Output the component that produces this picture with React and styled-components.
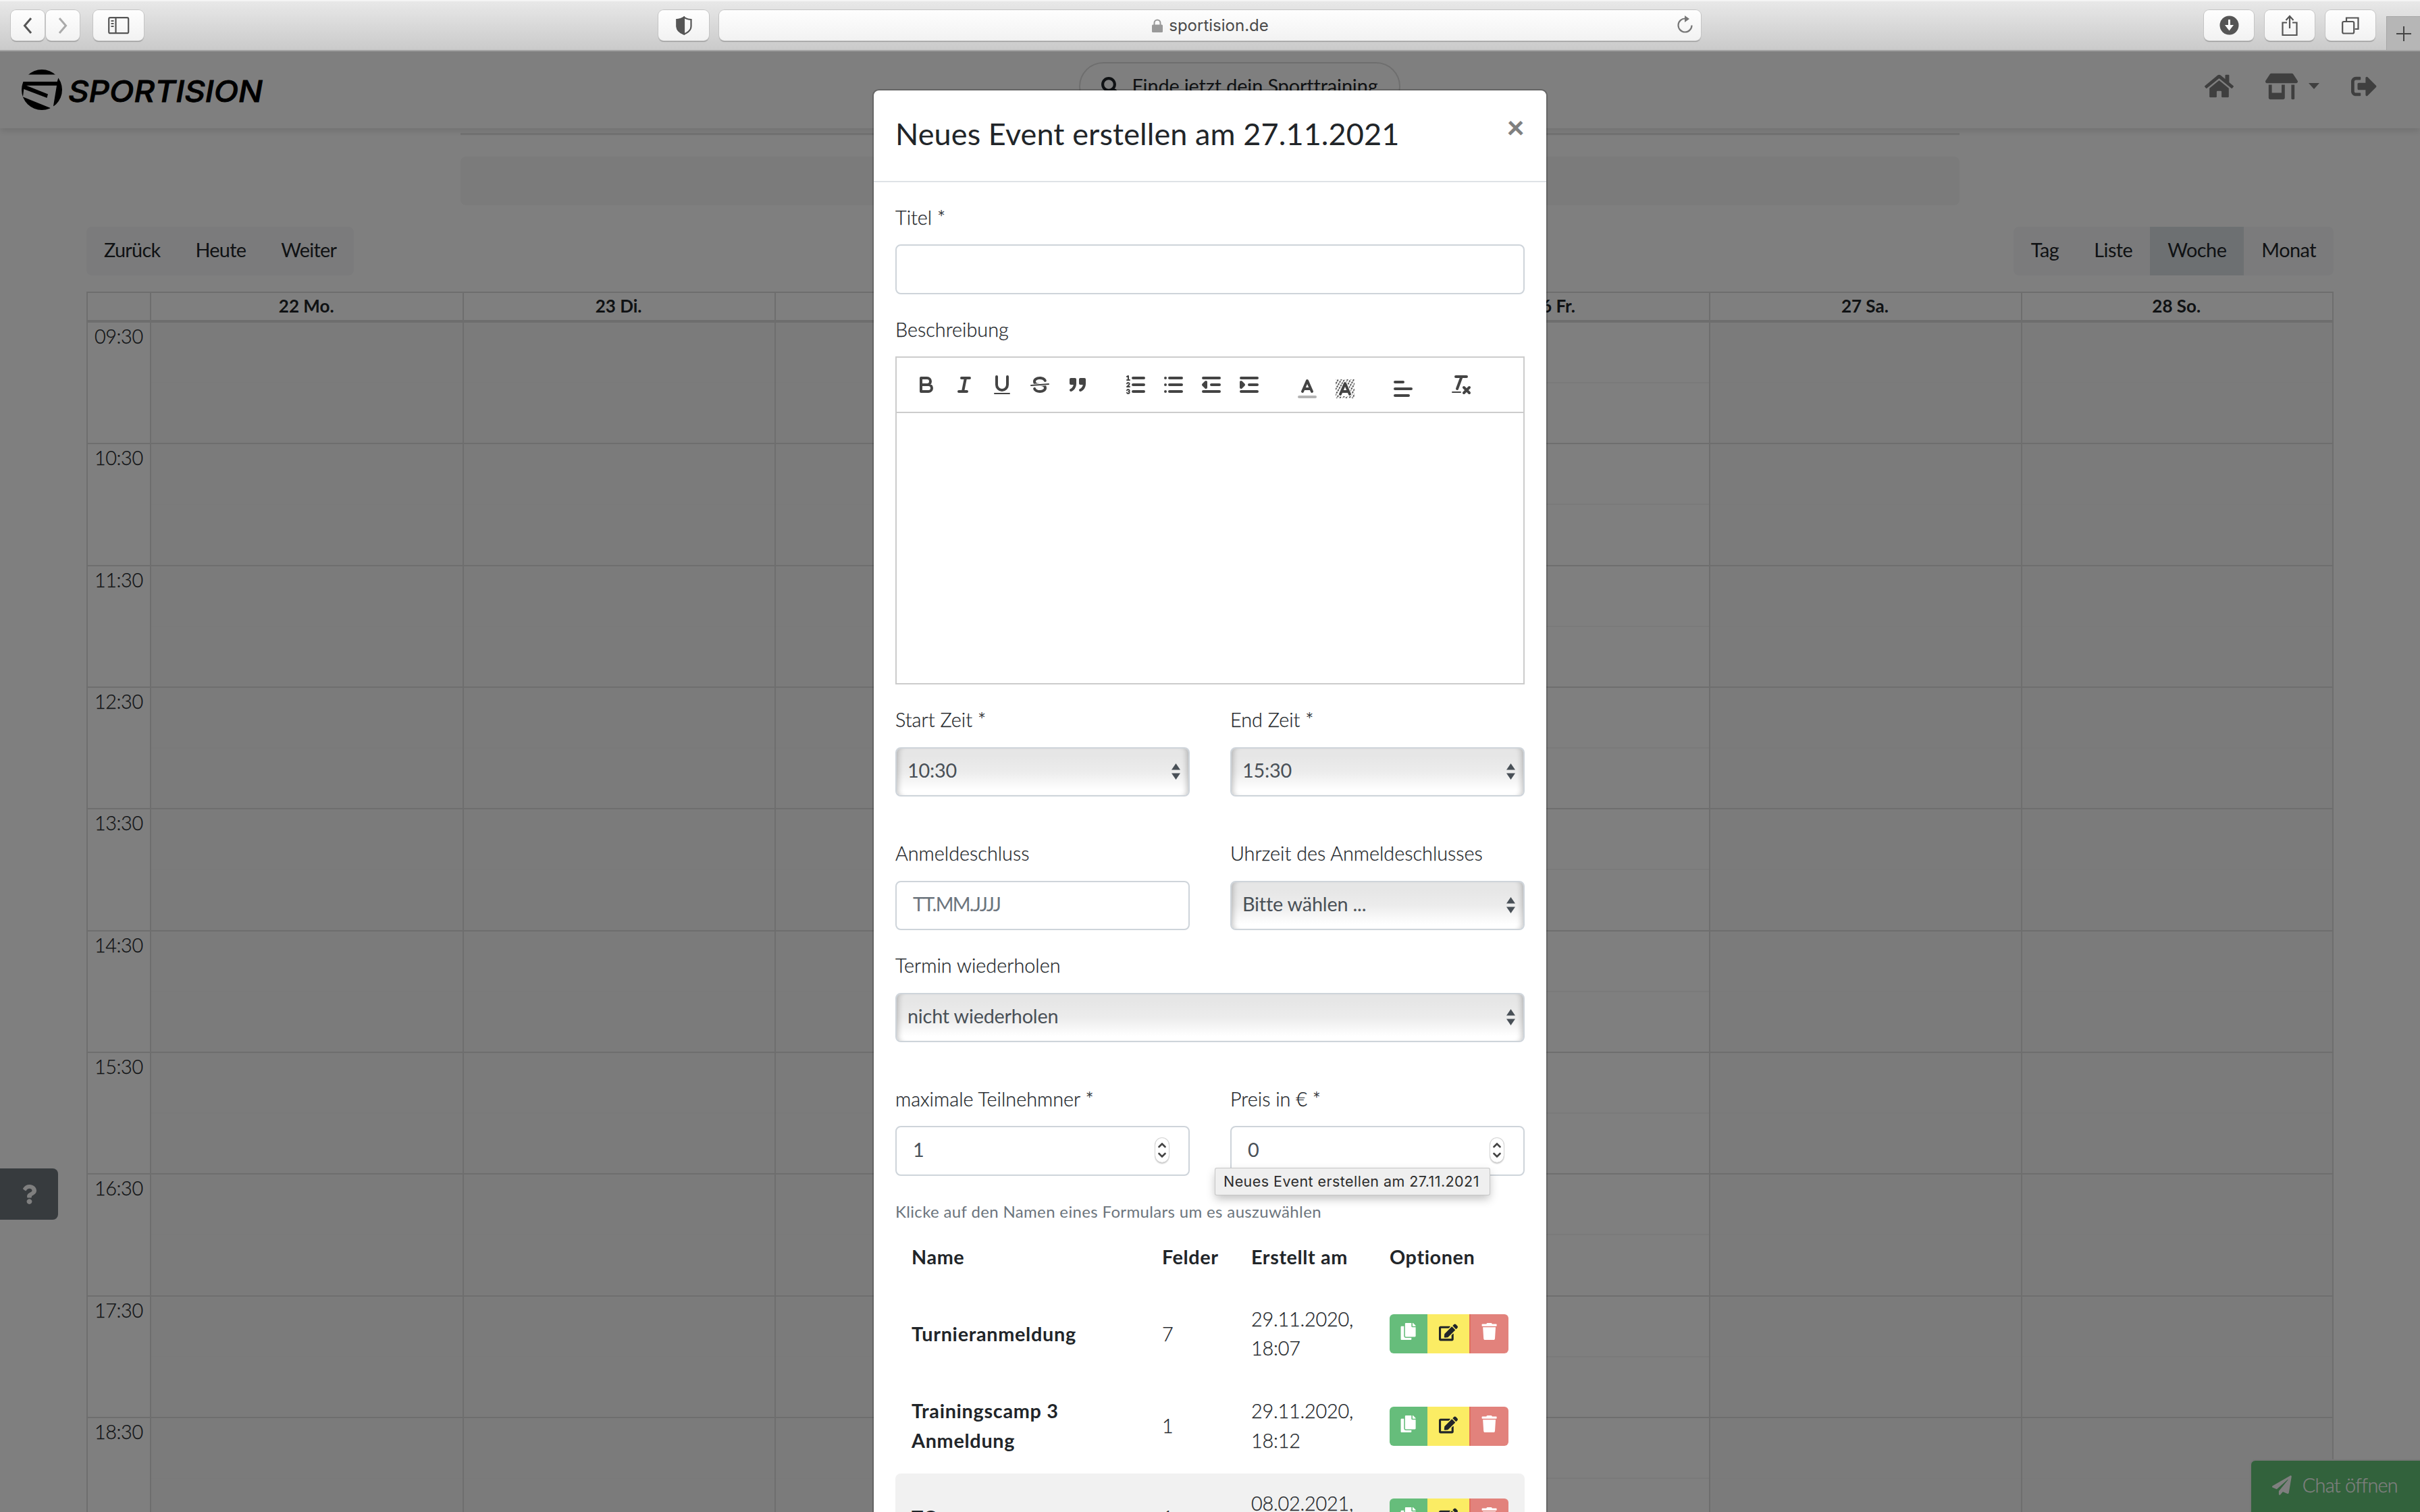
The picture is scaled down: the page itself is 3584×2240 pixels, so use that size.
import React from "react";
import styled, { createGlobalStyle, css } from "styled-components";
import {
  FaCopy,
  FaEdit,
  FaHome,
  FaPaperPlane,
  FaQuestion,
  FaSearch,
  FaSignOutAlt,
  FaStoreAlt,
  FaTrash,
} from "react-icons/fa";

const days = ["22 Mo.", "23 Di.", "24 Mi.", "25 Do.", "26 Fr.", "27 Sa.", "28 So."];
const hours = ["09:30", "10:30", "11:30", "12:30", "13:30", "14:30", "15:30", "16:30", "17:30", "18:30"];
const openDay = 4;

const forms = [
  { name: "Turnieranmeldung", fields: 7, date: "29.11.2020,", time: "18:07" },
  { name: "Trainingscamp 3 Anmeldung", fields: 1, date: "29.11.2020,", time: "18:12" },
  { name: "TC", fields: 1, date: "08.02.2021,", time: "10:21", active: true },
];

function BrowserBar() {
  return (
    <Bar>
      <BarGroup>
        <BarButton $w={50}>
          <svg width="14" height="26" viewBox="0 0 14 26"><path d="M12 2 2.5 13 12 24" /></svg>
        </BarButton>
        <BarButton $w={50} $muted>
          <svg width="14" height="26" viewBox="0 0 14 26"><path d="M2 2l9.5 11L2 24" /></svg>
        </BarButton>
        <BarButton $w={75} $left={18} $thin>
          <svg width="32" height="26" viewBox="0 0 32 26">
            <rect x="1.2" y="1.2" width="29" height="23" rx="2" />
            <path d="M11.5 1v24M4.5 6h4M4.5 10h4M4.5 14h4" />
          </svg>
        </BarButton>
      </BarGroup>
      <AddressGroup>
        <BarButton $w={75} $thin>
          <svg width="24" height="28" viewBox="0 0 24 28">
            <path d="M12 1.500c3 2.400 6.500 3.400 10.500 3.500v10c0 5-4 9-10.500 11.500C5.500 24 1.500 20 1.500 15V5C5.500 4.900 9 3.900 12 1.500z" />
            <path d="M12 1.500v25C5.500 24 1.500 20 1.500 15V5C5.500 4.900 9 3.900 12 1.500z" fill="#555" />
          </svg>
        </BarButton>
        <Address>
          <svg width="18" height="20" viewBox="0 0 18 20">
            <rect x="1" y="8.500" width="16" height="11.500" rx="1.500" fill="#999" />
            <path d="M4.500 9V6a4.500 4.500 0 0 1 9 0v3" fill="none" stroke="#999" strokeWidth="2" />
          </svg>
          <span>sportision.de</span>
          <Reload width="26" height="28" viewBox="0 0 26 28">
            <path d="M14 4.500a10 10 0 1 0 9.500 10" fill="none" stroke="#777" strokeWidth="2.200" />
            <path d="M13 0v10l7-5z" fill="#777" />
          </Reload>
        </Address>
      </AddressGroup>
      <RightGroup>
        <BarButton $w={74}>
          <svg width="29" height="29" viewBox="0 0 29 29">
            <circle cx="14.500" cy="14.500" r="14" fill="#555" stroke="none" />
            <path d="M14.500 6v9" stroke="#fff" />
            <path d="M8 14h13l-6.500 8.500z" fill="#fff" stroke="none" />
          </svg>
        </BarButton>
        <BarButton $w={74} $thin>
          <svg width="24" height="32" viewBox="0 0 24 32">
            <path d="M8 11.500H1.500V30h21V11.500H16M12 20V3M6.500 8 12 2l5.500 6" />
          </svg>
        </BarButton>
        <BarButton $w={74} $thin>
          <svg width="26" height="26" viewBox="0 0 26 26">
            <rect x="1.200" y="7" width="17" height="17.500" rx="2" />
            <path d="M7 6.500V1.500h17.500V18h-5" />
          </svg>
        </BarButton>
      </RightGroup>
      <NewTab>
        <svg width="24" height="24" viewBox="0 0 24 24"><path d="M12 1v22M1 12h22" /></svg>
      </NewTab>
    </Bar>
  );
}

function Logo() {
  return (
    <LogoSvg width="380" height="64" viewBox="0 0 380 64">
      <defs>
        <clipPath id="ball"><circle cx="30" cy="32" r="30" /></clipPath>
      </defs>
      <g clipPath="url(#ball)">
        <path d="M0 0h60v9.500H0z" />
        <path d="M0 20h52.700l1.600-5.500H60V64L47 56l5-30.300H7l32 12.800-1.500 5.500L3.300 31 2 42H0z" />
        <path d="M0 41.500l2 1L42.700 59v5H0z" />
      </g>
      <text x="69" y="50" textLength="288" lengthAdjust="spacingAndGlyphs">SPORTISION</text>
    </LogoSvg>
  );
}

function Navbar() {
  return (
    <Nav>
      <Logo />
      <SearchPill>
        <FaSearch size={27} />
        <span>Finde jetzt dein Sporttraining</span>
      </SearchPill>
      <NavIcons>
        <FaHome size={43} />
        <NavDropdown>
          <FaStoreAlt size={48} />
          <Caret />
        </NavDropdown>
        <FaSignOutAlt size={38} />
      </NavIcons>
    </Nav>
  );
}

function Calendar() {
  return (
    <CalendarWrap>
      <CalendarToolbar>
        <ButtonGroup $tight>
          <GroupButton>Zurück</GroupButton>
          <GroupButton>Heute</GroupButton>
          <GroupButton>Weiter</GroupButton>
        </ButtonGroup>
        <ButtonGroup>
          <GroupButton>Tag</GroupButton>
          <GroupButton>Liste</GroupButton>
          <GroupButton $active>Woche</GroupButton>
          <GroupButton>Monat</GroupButton>
        </ButtonGroup>
      </CalendarToolbar>
      <TimeView>
        <DayHeader>
          <Gutter />
          {days.map((day) => <DayName key={day}>{day}</DayName>)}
        </DayHeader>
        {hours.map((hour) => (
          <HourRow key={hour}>
            <Gutter>{hour}</Gutter>
            {days.map((day, i) => (
              <Slot key={day} $open={i === openDay}><i /></Slot>
            ))}
          </HourRow>
        ))}
      </TimeView>
    </CalendarWrap>
  );
}

const icons = {
  bold: (
    <path d="M5 4h4.500a2.500 2.500 0 0 1 0 5H5zM5 9h5.500a2.500 2.500 0 0 1 0 5H5z" />
  ),
  italic: <path d="M7 4h6M5 14h6M8 14l2-10" />,
  underline: (
    <>
      <path d="M5 3v6a4 4 0 0 0 8 0V3" />
      <rect className="fill" x="3" y="15" width="12" height="1" rx=".5" />
    </>
  ),
  strike: (
    <>
      <path className="thin" d="M15.500 8.500l-13 1" />
      <path className="fill" d="M9.007 8C6.542 7.791 6 7.519 6 6.500 6 5.792 7.283 5 9 5c1.571 0 2.765.679 2.969 1.309a1 1 0 0 0 1.900-.617C13.356 4.106 11.354 3 9 3 6.200 3 4 4.538 4 6.500a3.200 3.200 0 0 0 .5 1.843z" />
      <path className="fill" d="M8.984 10C11.457 10.208 12 10.479 12 11.500c0 .708-1.283 1.500-3 1.500-1.571 0-2.765-.679-2.969-1.309a1 1 0 1 0-1.900.617C4.644 13.894 6.646 15 9 15c2.800 0 5-1.538 5-3.500a3.200 3.200 0 0 0-.5-1.843z" />
    </>
  ),
  quote: (
    <>
      <rect className="both" x="4" y="5" width="3" height="3" />
      <rect className="both" x="11" y="5" width="3" height="3" />
      <path className="both" d="M7 8c0 4.031-3 5-3 5M14 8c0 4.031-3 5-3 5" />
    </>
  ),
  ordered: (
    <>
      <path d="M7 4h8M7 9h8M7 14h8" />
      <path className="thin" d="M2.500 5.500h2M2.500 3l1-.5v3M4.500 10.500h-2c0-.234 1.850-1.076 1.850-2.234a.959.959 0 0 0-1.850-.110M2.500 14.846a.959.959 0 0 0 1.850-.109A.7.7 0 0 0 3.750 14a.688.688 0 0 0 .6-.736.959.959 0 0 0-1.850-.109" />
    </>
  ),
  bullet: <path d="M6 4h9M6 9h9M6 14h9M3 4h0M3 9h0M3 14h0" />,
  outdent: (
    <>
      <path d="M3 14h12M3 4h12M9 9h6" />
      <path className="both" d="M5 7v4L3 9z" />
    </>
  ),
  indent: (
    <>
      <path d="M3 14h12M3 4h12M9 9h6" />
      <path className="both" d="M3 7v4l2-2z" />
    </>
  ),
  color: (
    <>
      <path d="M3 15h12" opacity=".4" />
      <path d="M5.500 11 9 3l3.500 8M11.630 9H6.380" />
    </>
  ),
  background: (
    <>
      <defs>
        <pattern id="hatch" width="2" height="2" patternUnits="userSpaceOnUse" patternTransform="rotate(30)">
          <rect className="fill" width=".9" height="1.400" />
        </pattern>
      </defs>
      <rect x="2" y="2" width="14" height="14" fill="url(#hatch)" stroke="none" />
      <path className="halo" d="M5.500 13 9 5l3.500 8z" />
      <path d="M5.500 13 9 5l3.500 8M11.630 11H6.380" />
    </>
  ),
  align: <path d="M3 9h12M3 14h10M3 4h6" />,
  clean: (
    <>
      <path d="M5 3h8M6 12l3.350-9M11 11l4 4M15 11l-4 4" />
      <rect className="fill" x="2" y="14" width="7" height="1" rx=".5" />
    </>
  ),
};

const toolbarGroups = [
  { items: ["bold", "italic", "underline", "strike", "quote"] },
  { items: ["ordered", "bullet", "outdent", "indent"] },
  { items: ["color", "background"], picker: true },
  { items: ["align"], picker: true },
  { items: ["clean"] },
];

function Editor() {
  return (
    <EditorBox>
      <EditorToolbar>
        {toolbarGroups.map((group) => (
          <Formats key={group.items[0]} $picker={group.picker}>
            {group.items.map((name) => (
              <svg key={name} viewBox="0 0 18 18">{icons[name]}</svg>
            ))}
          </Formats>
        ))}
      </EditorToolbar>
      <EditorArea />
    </EditorBox>
  );
}

function SelectField({ label, value }) {
  return (
    <Field>
      <Label>{label}</Label>
      <Select>
        {value}
        <svg width="13" height="24" viewBox="0 0 13 24"><path d="M6.500 0 13 9.500H0zM6.500 24 0 14.500h13z" /></svg>
      </Select>
    </Field>
  );
}

function NumberField({ label, value, children }) {
  return (
    <Field>
      <Label>{label}</Label>
      <Input>
        {value}
        <Stepper>
          <svg width="12" height="22" viewBox="0 0 12 22"><path d="M1.500 6 6 1.500 10.500 6M1.500 16 6 20.500l4.500-4.500" /></svg>
        </Stepper>
        {children}
      </Input>
    </Field>
  );
}

function FormRow({ form }) {
  return (
    <Row $active={form.active}>
      <strong>{form.name}</strong>
      <span>{form.fields}</span>
      <span>{form.date}<br />{form.time}</span>
      <Actions>
        <Action $bg="#66bd7b" $w={56}><FaCopy /></Action>
        <Action $bg="#fbec64" $color="#212529" $w={62}><FaEdit size={28} /></Action>
        <Action $bg="#e2827c" $w={58} $edge><FaTrash /></Action>
      </Actions>
    </Row>
  );
}

function EventModal() {
  return (
    <Modal>
      <ModalHeader>
        <ModalTitle>Neues Event erstellen am 27.11.2021</ModalTitle>
        <Close>×</Close>
      </ModalHeader>
      <ModalBody>
        <Field>
          <Label>Titel *</Label>
          <Input />
        </Field>
        <Field>
          <Label>Beschreibung</Label>
          <Editor />
        </Field>
        <Columns $spaced>
          <SelectField label="Start Zeit *" value="10:30" />
          <SelectField label="End Zeit *" value="15:30" />
        </Columns>
        <Columns>
          <Field>
            <Label>Anmeldeschluss</Label>
            <Input $placeholder>TT.MM.JJJJ</Input>
          </Field>
          <SelectField label="Uhrzeit des Anmeldeschlusses" value="Bitte wählen ..." />
        </Columns>
        <Columns $spaced>
          <SelectField label="Termin wiederholen" value="nicht wiederholen" />
        </Columns>
        <Columns>
          <NumberField label="maximale Teilnehmner *" value="1" />
          <NumberField label="Preis in € *" value="0">
            <Tooltip>Neues Event erstellen am 27.11.2021</Tooltip>
          </NumberField>
        </Columns>
        <Hint>Klicke auf den Namen eines Formulars um es auszuwählen</Hint>
        <HeadRow>
          <strong>Name</strong>
          <strong>Felder</strong>
          <strong>Erstellt am</strong>
          <strong>Optionen</strong>
        </HeadRow>
        {forms.map((form) => <FormRow key={form.name} form={form} />)}
      </ModalBody>
    </Modal>
  );
}

export default function App() {
  return (
    <>
      <GlobalStyle />
      <BrowserBar />
      <Viewport>
        <Navbar />
        <Content>
          <Divider />
          <Panel />
        </Content>
        <Calendar />
        <HelpButton><FaQuestion /></HelpButton>
        <ChatButton><FaPaperPlane /> <span>Chat öffnen</span></ChatButton>
        <Backdrop />
        <EventModal />
      </Viewport>
    </>
  );
}

const GlobalStyle = createGlobalStyle`
  * {
    box-sizing: border-box;
  }
  body {
    margin: 0;
    background: #fff;
    color: #212529;
    font-family: Lato, sans-serif;
    font-size: 28.8px;
    font-weight: 300;
    line-height: 1.5;
    overflow: hidden;
  }
`;

/* Lato Light is a bit thin at this size */
const lightText = css`
  -webkit-text-stroke: .25px currentColor;
`;

/* browser toolbar */
const Bar = styled.div`
  display: grid;
  grid-template-columns: 975px 1544px 1fr 50px;
  align-items: start;
  height: 76px;
  padding-top: 13px;
  background: linear-gradient(#e8e8e8, #cacaca);
  border-top: 2px solid #f4f4f4;
  border-bottom: 2px solid #a4a4a4;
`;

const BarGroup = styled.div`
  display: flex;
  gap: 2px;
  padding-left: 16px;
`;

const AddressGroup = styled.div`
  display: flex;
  gap: 15px;
`;

const RightGroup = styled.div`
  display: flex;
  justify-content: flex-end;
  gap: 16px;
  padding-right: 16px;
`;

const raised = css`
  height: 45px;
  border-radius: 8px;
  background: linear-gradient(#fefefe, #f2f2f2);
  box-shadow: 0 0 0 1px #c4c4c4, 0 2px 1px #999;
`;

const BarButton = styled.div`
  ${raised}
  width: ${(p) => p.$w}px;
  margin-left: ${(p) => p.$left || 0}px;
  display: flex;
  align-items: center;
  justify-content: center;
  svg {
    fill: none;
    stroke: ${(p) => (p.$muted ? "#aaa" : "#555")};
    stroke-width: ${(p) => (p.$thin ? 2.2 : 3)};
  }
`;

const Address = styled.div`
  ${raised}
  flex: 1;
  position: relative;
  display: flex;
  align-items: center;
  justify-content: center;
  gap: 8px;
  color: #4a4a4a;
  font: 400 24px Inter, sans-serif;
`;

const Reload = styled.svg`
  position: absolute;
  right: 11px;
  top: 8px;
`;

const NewTab = styled.div`
  height: 50px;
  margin-top: 9px;
  display: flex;
  align-items: center;
  justify-content: center;
  background: #b6b6b6;
  border: solid #a6a6a6;
  border-width: 1px 0 0 1px;
  svg {
    stroke: #444;
    stroke-width: 2;
  }
`;

/* page */
const Viewport = styled.div`
  position: relative;
  height: 2164px;
  overflow: hidden;
`;

const Nav = styled.nav`
  display: grid;
  grid-template-columns: 1568px 1fr auto;
  align-items: center;
  height: 114px;
  padding: 0 64px 11px 30px;
  box-shadow: 0 4px 10px rgba(0, 0, 0, .12);
`;

const LogoSvg = styled.svg`
  margin-top: 10px;
  margin-left: 2px;
  text {
    font: italic 500 44px Inter, sans-serif;
    stroke: #000;
    stroke-width: .8;
  }
`;

const SearchPill = styled.div`
  width: 476px;
  height: 72px;
  display: flex;
  align-items: center;
  justify-content: center;
  gap: 18px;
  border: 2px solid #ddd;
  border-radius: 36px;
  font-weight: 400;
  letter-spacing: -.1px;
`;

const NavIcons = styled.div`
  display: flex;
  align-items: center;
  gap: 47px;
  color: #7f7f7f;
`;

const NavDropdown = styled.div`
  display: flex;
  align-items: center;
  gap: 16px;
`;

const Caret = styled.i`
  border: 8px solid transparent;
  border-top: 9px solid #7f7f7f;
  border-bottom: 0;
`;

const Content = styled.div`
  width: 2220px;
  margin: 7px 0 0 682px;
`;

const Divider = styled.div`
  height: 3px;
  background: #e0e0e0;
`;

const Panel = styled.div`
  height: 72px;
  margin-top: 32px;
  border-radius: 8px;
  background: #f6f7f7;
`;

const CalendarWrap = styled.div`
  margin: 32px 128px 0;
`;

const CalendarToolbar = styled.div`
  display: flex;
  justify-content: space-between;
  margin-bottom: 24px;
`;

const ButtonGroup = styled.div`
  display: flex;
  height: 72px;
  border-radius: 8px;
  background: #f6f7f8;
  letter-spacing: ${(p) => (p.$tight ? "-.7px" : "-.5px")};
`;

const GroupButton = styled.div`
  display: flex;
  align-items: center;
  padding: 0 26px 3px;
  font-weight: 400;
  background: ${(p) => (p.$active ? "#dae0e5" : "none")};
`;

const TimeView = styled.div`
  border: 2px solid #ddd;
  background: #fff;
`;

const weekGrid = css`
  display: grid;
  grid-template-columns: 94px repeat(7, 1fr);
`;

const DayHeader = styled.div`
  ${weekGrid}
  height: 44px;
  border-bottom: 4px solid #ddd;
`;

const HourRow = styled.div`
  ${weekGrid}
  height: 180.33px;
`;

const Gutter = styled.div`
  ${lightText}
  padding: 0 10px;
  letter-spacing: -.4px;
  line-height: 41px;
  border-right: 2px solid #ddd;
  ${HourRow} & {
    border-bottom: 2px solid #ddd;
  }
`;

const DayName = styled.div`
  padding-right: 2px;
  font-size: 26px;
  font-weight: 700;
  line-height: 39px;
  text-align: center;
  & + & {
    border-left: 2px solid #ddd;
  }
`;

const Slot = styled.div`
  background: ${(p) => (p.$open ? "#fff" : "#f6f6f6")};
  border-bottom: 2px solid #ddd;
  & + & {
    border-left: 2px solid #ddd;
  }
  i {
    display: block;
    height: 90px;
    border-bottom: 2px solid #f4f4f4;
  }
`;

const HelpButton = styled.div`
  position: absolute;
  left: 0;
  top: 1655px;
  width: 86px;
  height: 76px;
  display: flex;
  align-items: center;
  justify-content: center;
  border-radius: 0 8px 8px 0;
  background: #6f767d;
  color: #fff;
  font-size: 29px;
`;

const ChatButton = styled.div`
  ${lightText}
  position: absolute;
  right: 0;
  bottom: 0;
  width: 252px;
  height: 78px;
  padding: 0 0 3px 31px;
  display: flex;
  align-items: center;
  gap: 16px;
  border: 2px solid #eee;
  border-width: 2px 0 0 2px;
  border-radius: 8px 0 0 0;
  background: #64c478;
  color: #fff;
  letter-spacing: -.7px;
`;

const Backdrop = styled.div`
  position: absolute;
  inset: 0;
  background: rgba(0, 0, 0, .5);
`;

/* modal */
const Modal = styled.div`
  position: absolute;
  top: 56px;
  left: 1292px;
  width: 1000px;
  height: 2300px;
  border: 2px solid rgba(0, 0, 0, .2);
  border-radius: 9.6px;
  background: #fff;
  background-clip: padding-box;
`;

const ModalHeader = styled.div`
  display: flex;
  align-items: flex-start;
  justify-content: space-between;
  height: 136px;
  padding: 31px 32px 0 32px;
  border-bottom: 2px solid #dee2e6;
`;

const ModalTitle = styled.h4`
  margin: 0;
  font-size: 45px;
  font-weight: 400;
  letter-spacing: .1px;
`;

const Close = styled.span`
  color: #808080;
  font-size: 46px;
  font-weight: 900;
  line-height: 45px;
`;

const ModalBody = styled.div`
  padding: 32px;
`;

const Field = styled.div`
  flex: 1;
  margin-bottom: 32px;
`;

const Label = styled.div`
  ${lightText}
  height: 44.35px;
  margin-bottom: 16px;
  line-height: 40px;
`;

const Columns = styled.div`
  display: flex;
  gap: 60px;
  margin-bottom: ${(p) => (p.$spaced ? 32 : 0)}px;
`;

const control = css`
  position: relative;
  display: flex;
  align-items: center;
  justify-content: space-between;
  height: 73.6px;
  border: 2px solid #ced4da;
  border-radius: 8px;
  color: #495057;
  font-weight: 400;
`;

const Input = styled.div`
  ${control}
  padding: 0 29px 4px 24px;
  color: ${(p) => (p.$placeholder ? "#6c757d" : "#495057")};
  letter-spacing: ${(p) => (p.$placeholder ? "-1.700px" : "0")};
`;

const Select = styled.div`
  ${control}
  padding: 0 12px 4px 16px;
  letter-spacing: -.2px;
  background: linear-gradient(#e6e6e6 15%, #ececec 50%, #fff 90%);
  box-shadow: inset 9px 0 8px -7px rgba(0, 0, 0, .24), inset -9px 0 8px -7px rgba(0, 0, 0, .24);
  svg {
    fill: #495057;
    margin-top: 4px;
  }
`;

const Stepper = styled.span`
  width: 20px;
  height: 36px;
  margin-top: 2px;
  display: flex;
  align-items: center;
  justify-content: center;
  border-radius: 10px;
  box-shadow: 0 0 0 1px #d4d4d4, 0 2px 2px rgba(0, 0, 0, .25);
  svg {
    fill: none;
    stroke: #444;
    stroke-width: 2.6;
    stroke-linecap: round;
  }
`;

const Tooltip = styled.div`
  position: absolute;
  top: 61px;
  left: -24px;
  height: 39px;
  padding: 0 15px 0 12px;
  color: #2c2c2c;
  font: 400 21.5px/38px Inter, sans-serif;
  letter-spacing: .44px;
  white-space: nowrap;
  background: #efefef;
  border-radius: 2px;
  box-shadow: 0 0 0 1px #c6c6c6, 0 6px 14px rgba(0, 0, 0, .25);
`;

const EditorBox = styled.div`
  border: 2px solid #ccc;
`;

const EditorToolbar = styled.div`
  display: flex;
  height: 82px;
  padding: 16px;
  border-bottom: 2px solid #ccc;
`;

const EditorArea = styled.div`
  height: 400px;
`;

const Formats = styled.div`
  display: flex;
  gap: 20px;
  height: 36px;
  padding: 0 10px;
  margin-right: 30px;
  margin-top: ${(p) => (p.$picker ? 12 : 6)}px;
  svg {
    width: 36px;
    height: 36px;
    fill: none;
    stroke: #444;
    stroke-width: 2;
    stroke-linecap: round;
    stroke-linejoin: round;
  }
  .thin {
    stroke-width: 1;
  }
  .fill {
    fill: #444;
    stroke: none;
  }
  .both {
    fill: #444;
  }
  .halo {
    fill: #fff;
    stroke: #fff;
    stroke-width: 3;
  }
`;

const Hint = styled.div`
  height: 43px;
  color: #6c757d;
  font-size: 24px;
  font-weight: 400;
  letter-spacing: .35px;
  line-height: 42px;
`;

const Row = styled.div`
  display: grid;
  grid-template-columns: 371px 132px 205px 224px;
  align-items: center;
  height: 136.4px;
  border-radius: 8px;
  background: ${(p) => (p.$active ? "#f1f1f1" : "none")};
  & > * {
    padding: 0 24px 4px;
  }
  span {
    ${lightText}
    letter-spacing: -.2px;
  }
  strong {
    font-weight: 700;
    letter-spacing: .7px;
  }
`;

const HeadRow = styled(Row)`
  height: 93px;
  strong {
    padding-bottom: 2px;
    letter-spacing: .6px;
  }
`;

const Actions = styled.div`
  display: flex;
`;

const Action = styled.div`
  display: flex;
  justify-content: center;
  width: ${(p) => p.$w}px;
  height: 58px;
  padding: 13px 0;
  flex: none;
  color: ${(p) => p.$color || "#fff"};
  background: ${(p) => p.$bg};
  border-left: ${(p) => (p.$edge ? "2px solid #e0705f" : "0")};
  font-size: 25.2px;
  &:first-child {
    border-radius: 6px 0 0 6px;
  }
  &:last-child {
    border-radius: 0 6px 6px 0;
  }
`;
